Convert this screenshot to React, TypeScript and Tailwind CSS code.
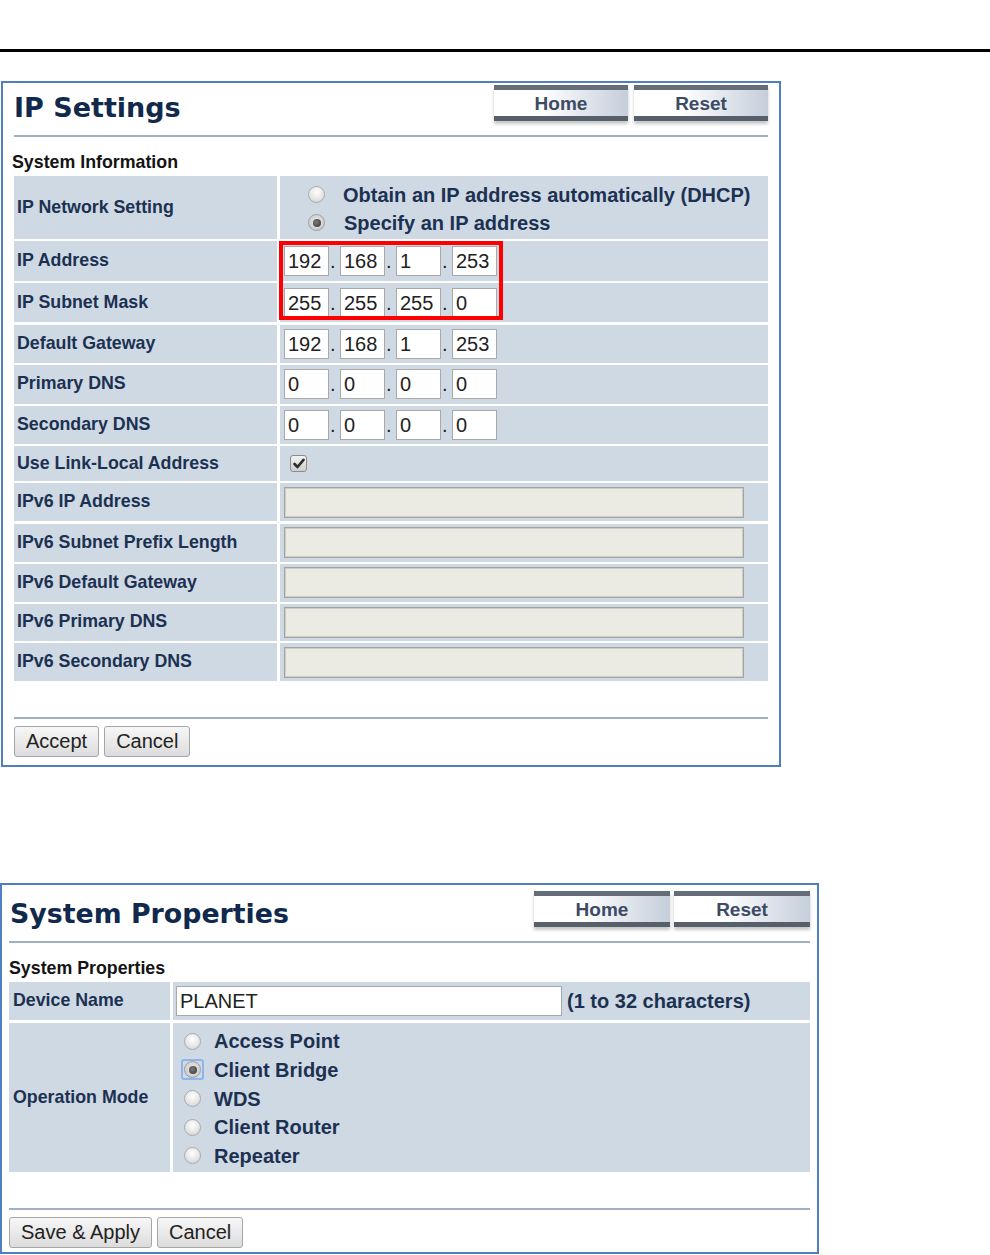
import React, { Fragment } from "react";

const Radio = ({ checked = false, focus = false }: { checked?: boolean; focus?: boolean }) => (
  <span className="relative inline-flex w-[17px] h-[17px] shrink-0">
    {focus && <span className="absolute -left-[3px] -top-[2px] w-[23px] h-[21px] rounded-[3px] border-2 border-[#8db5ea]" />}
    <span
      className={
        checked
          ? "relative w-[17px] h-[17px] rounded-full border border-[#9f9f9f] bg-[radial-gradient(circle_at_50%_45%,#eeeeee_0%,#cdcdcd_70%,#bcbcbc_100%)] flex items-center justify-center"
          : "relative w-[17px] h-[17px] rounded-full border border-[#ababab] bg-[radial-gradient(circle_at_50%_35%,#ffffff_0%,#e6e6e6_55%,#cbcbcb_100%)]"
      }
    >
      {checked && <span className="w-[8px] h-[8px] rounded-full bg-[radial-gradient(circle_at_40%_40%,#7a7a7a,#333333)]" />}
    </span>
  </span>
);

const Checkbox = () => (
  <span className="inline-flex w-[17px] h-[17px] rounded-[3px] border border-[#8c8c8c] bg-[linear-gradient(#f4f4f4,#cdcdcd)] items-center justify-center">
    <svg width="12" height="11" viewBox="0 0 12 11">
      <path d="M1.5 6 L4.5 9 L10.5 1.8" fill="none" stroke="#2e2e2e" strokeWidth="2.6" strokeLinecap="round" strokeLinejoin="round" />
    </svg>
  </span>
);

const IpGroup = ({ vals }: { vals: string[] }) => (
  <div className="flex">
    {vals.map((v, i) => (
      <Fragment key={i}>
        {i > 0 && (
          <span className="w-[11px] h-[30px] pt-[1px] pl-[1px] text-[20px] leading-[28px] text-[#222]">.</span>
        )}
        <div className="w-[45px] h-[30px] border border-[#a9a9a9] bg-white text-[20px] leading-[28px] pl-[3px] text-[#222]">
          {v}
        </div>
      </Fragment>
    ))}
  </div>
);

const V6Box = () => (
  <div className="w-[460px] h-[31px] border border-[#a3a3a0] bg-[#ebebe4] shadow-[inset_0_0_0_1px_#cfcfc9]" />
);

const NavBtn = ({ label, wide }: { label: string; wide?: boolean }) => (
  <div className={(wide ? "w-[136px]" : "w-[134px]") + " h-[36px] flex flex-col shadow-[0_3px_3px_rgba(0,0,0,0.22)]"}>
    <div className="h-[5px] bg-[#656d79]" />
    <div className="flex-1 bg-[linear-gradient(to_right,#ffffff_35%,#c5cedb)] flex items-center justify-center text-[19px] font-bold leading-none text-[#3d4b64]">
      {label}
    </div>
    <div className="h-[5px] bg-[#575f6b]" />
  </div>
);

const FormBtn = ({ label }: { label: string }) => (
  <div className="h-[31px] px-[11px] border border-[#a6a6a6] rounded-[3px] bg-[linear-gradient(#f7f7f7,#dcdcdc)] text-[20px] leading-[29px] text-[#222]">
    {label}
  </div>
);

const Label = ({ text }: { text: string }) => (
  <span className="text-[17.8px] font-bold leading-none text-[#1c3152]">{text}</span>
);

type Row = { label: string; h: string; kind: "radio" | "ip" | "check" | "v6"; ip?: string[] };

const rows1: Row[] = [
  { label: "IP Network Setting", h: "h-[63px]", kind: "radio" },
  { label: "IP Address", h: "h-[40px]", kind: "ip", ip: ["192", "168", "1", "253"] },
  { label: "IP Subnet Mask", h: "h-[39px]", kind: "ip", ip: ["255", "255", "255", "0"] },
  { label: "Default Gateway", h: "h-[38px]", kind: "ip", ip: ["192", "168", "1", "253"] },
  { label: "Primary DNS", h: "h-[39px]", kind: "ip", ip: ["0", "0", "0", "0"] },
  { label: "Secondary DNS", h: "h-[38px]", kind: "ip", ip: ["0", "0", "0", "0"] },
  { label: "Use Link-Local Address", h: "h-[35px]", kind: "check" },
  { label: "IPv6 IP Address", h: "h-[38px]", kind: "v6" },
  { label: "IPv6 Subnet Prefix Length", h: "h-[38px]", kind: "v6" },
  { label: "IPv6 Default Gateway", h: "h-[38px]", kind: "v6" },
  { label: "IPv6 Primary DNS", h: "h-[37px]", kind: "v6" },
  { label: "IPv6 Secondary DNS", h: "h-[38px]", kind: "v6" },
];

export default function App() {
  return (
    <div className="w-[990px] h-[1255px] bg-white font-['Liberation_Sans',Arial,sans-serif] overflow-hidden">
      <div className="pt-[49px]">
        <div className="h-[3px] bg-black" />
      </div>

      {/* Panel 1 */}
      <div className="mt-[29px] ml-[1px] w-[780px] h-[686px] border-2 border-[#4f7fbf] px-[11px] pt-[2px]">
        <div className="flex justify-between h-[50px]">
          <div className="mt-[9px] text-[27px] leading-none font-bold font-['DejaVu_Sans',Verdana,sans-serif] text-[#10294c]">
            IP Settings
          </div>
          <div className="flex gap-[6px]">
            <NavBtn label="Home" />
            <NavBtn label="Reset" />
          </div>
        </div>
        <div className="h-[2px] bg-[#a0b0c4]" />
        <div className="h-[39px] pt-[17px] -ml-[2px] text-[17.8px] leading-none font-bold text-[#141414]">System Information</div>

        <div className="relative flex flex-col gap-[2.2px]">
          {rows1.map((r) => (
            <div key={r.label} className={r.h + " flex gap-[3px]"}>
              <div className="w-[263px] bg-[#cfd9e3] flex items-center pl-[3px]">
                <Label text={r.label} />
              </div>
              <div className="flex-1 bg-[#cfd9e3] flex items-center">
                {r.kind === "radio" && (
                  <div className="flex flex-col pl-[28px] pt-[2px]">
                    <div className="h-[28px] flex items-center">
                      <Radio />
                      <span className="ml-[18px] text-[20px] font-bold leading-none text-[#1c3152]">
                        Obtain an IP address automatically (DHCP)
                      </span>
                    </div>
                    <div className="h-[28px] flex items-center">
                      <Radio checked />
                      <span className="ml-[19px] text-[20px] font-bold leading-none text-[#1c3152]">Specify an IP address</span>
                    </div>
                  </div>
                )}
                {r.kind === "ip" && r.ip && (
                  <div className="pl-[4px]">
                    <IpGroup vals={r.ip} />
                  </div>
                )}
                {r.kind === "check" && (
                  <div className="pl-[10px] pt-[1px]">
                    <Checkbox />
                  </div>
                )}
                {r.kind === "v6" && (
                  <div className="pl-[4px]">
                    <V6Box />
                  </div>
                )}
              </div>
            </div>
          ))}
          <div className="absolute left-[265px] top-[65px] w-[224px] h-[79px] border-4 border-[#ff0000]" />
        </div>

        <div className="mt-[36px] h-[2px] bg-[#a0b0c4]" />
        <div className="mt-[7px] flex gap-[5px]">
          <FormBtn label="Accept" />
          <FormBtn label="Cancel" />
        </div>
      </div>

      {/* Panel 2 */}
      <div className="mt-[116px] w-[819px] h-[371px] border-2 border-[#4f7fbf] px-[7px] pt-[6px]">
        <div className="flex justify-between h-[50px]">
          <div className="mt-[10px] ml-[1px] text-[26.8px] leading-none font-bold font-['DejaVu_Sans',Verdana,sans-serif] text-[#10294c]">
            System Properties
          </div>
          <div className="flex gap-[4px]">
            <NavBtn label="Home" wide />
            <NavBtn label="Reset" wide />
          </div>
        </div>
        <div className="h-[2px] bg-[#a0b0c4]" />
        <div className="h-[39px] pt-[17px] text-[17.8px] leading-none font-bold text-[#141414]">System Properties</div>

        <div className="flex flex-col gap-[3px]">
          <div className="h-[38px] flex gap-[3px]">
            <div className="w-[161px] bg-[#cfd9e3] flex items-center pl-[4px]">
              <Label text="Device Name" />
            </div>
            <div className="flex-1 bg-[#cfd9e3] flex items-center pl-[3px]">
              <div className="w-[386px] h-[30px] border border-[#a9a9a9] bg-white text-[20px] leading-[28px] pl-[3px] text-[#222]">
                PLANET
              </div>
              <span className="ml-[5px] text-[20px] font-bold leading-none text-[#1c3152]">(1 to 32 characters)</span>
            </div>
          </div>
          <div className="h-[149px] flex gap-[3px]">
            <div className="w-[161px] bg-[#cfd9e3] flex items-center pl-[4px]">
              <Label text="Operation Mode" />
            </div>
            <div className="flex-1 bg-[#cfd9e3] flex flex-col justify-center pl-[11px] pt-[2px]">
              {["Access Point", "Client Bridge", "WDS", "Client Router", "Repeater"].map((o) => (
                <div key={o} className="h-[28.7px] flex items-center">
                  <Radio checked={o === "Client Bridge"} focus={o === "Client Bridge"} />
                  <span className="ml-[13px] text-[20px] font-bold leading-none text-[#1c3152]">{o}</span>
                </div>
              ))}
            </div>
          </div>
        </div>

        <div className="mt-[36px] h-[2px] bg-[#a0b0c4]" />
        <div className="mt-[7px] flex gap-[5px]">
          <FormBtn label="Save & Apply" />
          <FormBtn label="Cancel" />
        </div>
      </div>
    </div>
  );
}
